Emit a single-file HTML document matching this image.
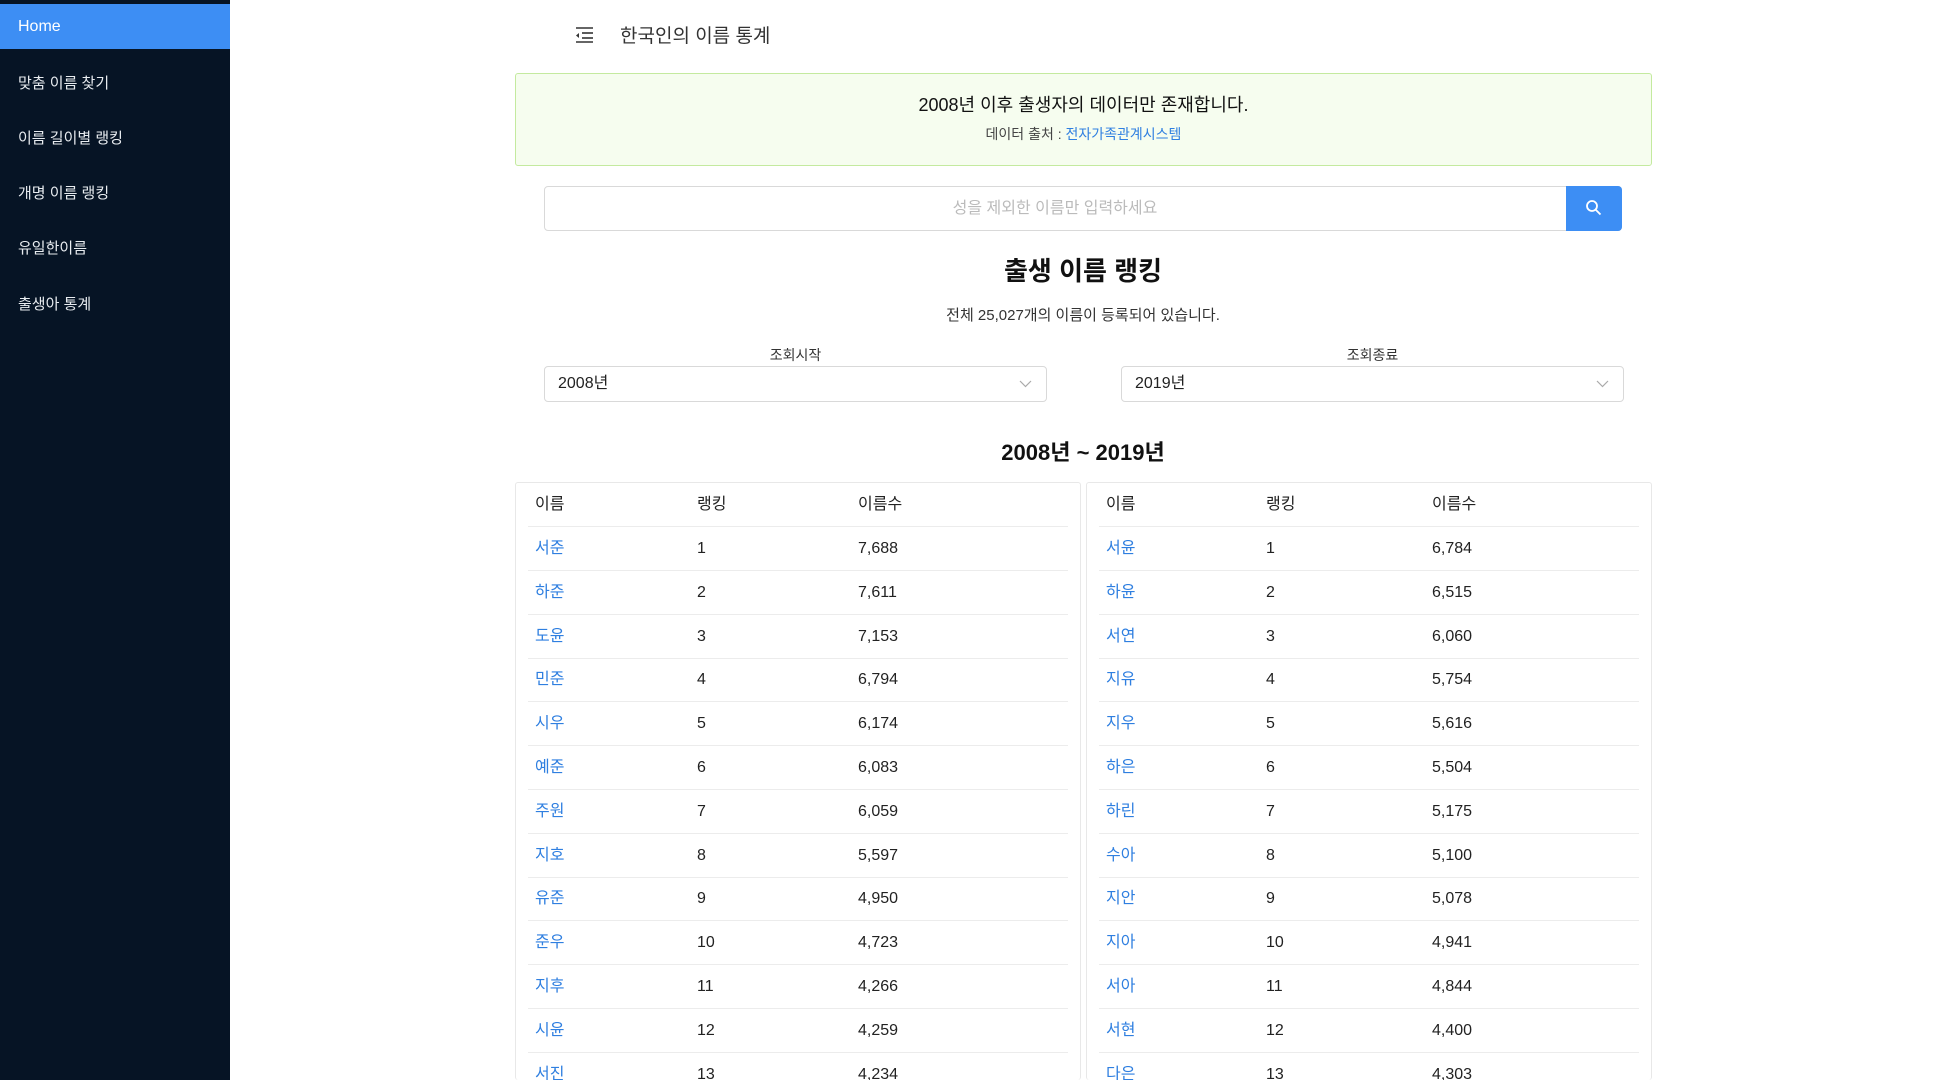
<!DOCTYPE html>
<html><head><meta charset="utf-8"><style>
*{box-sizing:border-box;margin:0;padding:0}
html,body{width:1934px;height:1080px;overflow:hidden}
body{background:#fff;font-family:"Liberation Sans","Noto Sans CJK KR",sans-serif;color:#222;position:relative}
.side{position:absolute;left:0;top:0;width:230px;height:1080px;background:#061425}
.home{position:absolute;left:0;top:4px;width:230px;height:45px;background:#3d8ef4;color:#fff;font-size:16px;line-height:45px;padding-left:18px}
.mi{position:absolute;left:18px;color:#e8ecf0;font-size:15px}
.abs{position:absolute}
.alert{left:515px;top:73px;width:1137px;height:93px;background:#f6fdef;border:1px solid #c4ea9f;border-radius:3px;text-align:center}
.search{left:544px;top:186px;width:1078px;height:45px;border:1px solid #d9d9d9;border-radius:4px}
.btn{right:-1px;top:-1px;width:56px;height:45px;background:#3d8ef4;border-radius:0 4px 4px 0}
.sel{top:366px;width:503px;height:36px;border:1px solid #d9d9d9;border-radius:4px;font-size:16px;line-height:34px;padding-left:13px}
.tbl{top:482px;width:566px;height:598px;border:1px solid #e8e8e8;border-bottom:none;border-radius:3px;overflow:hidden}
.row{position:absolute;left:12px;right:12px;height:44px;border-bottom:1px solid #ececec;font-size:16px}
.row span{position:absolute;top:0;line-height:43px;height:43px}
a{color:#2f7fe0;text-decoration:none}
</style></head><body>
<div class="side">
<div class="home">Home</div>
<div class="mi" style="top:72px">맞춤 이름 찾기</div>
<div class="mi" style="top:127px">이름 길이별 랭킹</div>
<div class="mi" style="top:182px">개명 이름 랭킹</div>
<div class="mi" style="top:237px">유일한이름</div>
<div class="mi" style="top:293px">출생아 통계</div>
</div>
<svg class="abs" style="left:574px;top:26px" width="20" height="18" viewBox="0 0 20 18"><g stroke="#333" stroke-width="1.6"><line x1="2" y1="2" x2="19" y2="2"/><line x1="8" y1="7" x2="19" y2="7"/><line x1="8" y1="12" x2="19" y2="12"/><line x1="2" y1="16" x2="19" y2="16"/></g><path d="M5 7 L2 9.5 L5 12Z" fill="#333"/></svg>
<div class="abs" style="left:620px;top:21px;font-size:19px;color:#333">한국인의 이름 통계</div>
<div class="abs alert">
<div style="margin-top:17px;font-size:18px;color:#111">2008년 이후 출생자의 데이터만 존재합니다.</div>
<div style="margin-top:7px;font-size:14px;color:#444">데이터 출처 : <a>전자가족관계시스템</a></div>
</div>
<div class="abs search"><div style="text-align:center;line-height:43px;color:#bbb;font-size:16px;padding-right:56px">성을 제외한 이름만 입력하세요</div>
<div class="abs btn"><svg style="position:absolute;left:19px;top:13px" width="18" height="18" viewBox="0 0 18 18"><circle cx="7" cy="7" r="5" fill="none" stroke="#fff" stroke-width="1.8"/><line x1="10.6" y1="10.6" x2="15.5" y2="15.5" stroke="#fff" stroke-width="1.8"/></svg></div></div>
<div class="abs" style="left:544px;width:1078px;top:251px;text-align:center;font-size:26px;font-weight:bold;color:#111">출생 이름 랭킹</div>
<div class="abs" style="left:544px;width:1078px;top:304px;text-align:center;font-size:15px;color:#333">전체 25,027개의 이름이 등록되어 있습니다.</div>
<div class="abs" style="left:544px;width:503px;top:345px;text-align:center;font-size:14px;color:#333">조회시작</div>
<div class="abs" style="left:1121px;width:503px;top:345px;text-align:center;font-size:14px;color:#333">조회종료</div>
<div class="abs sel" style="left:544px">2008년<svg style="position:absolute;right:14px;top:13px" width="13" height="8" viewBox="0 0 13 8"><path d="M1 1 L6.5 6.5 L12 1" fill="none" stroke="#aaa" stroke-width="1.2"/></svg></div>
<div class="abs sel" style="left:1121px">2019년<svg style="position:absolute;right:14px;top:13px" width="13" height="8" viewBox="0 0 13 8"><path d="M1 1 L6.5 6.5 L12 1" fill="none" stroke="#aaa" stroke-width="1.2"/></svg></div>
<div class="abs" style="left:544px;width:1078px;top:435px;text-align:center;font-size:22px;font-weight:bold;color:#111">2008년 ~ 2019년</div>
<div class="abs tbl" style="left:515px" id="t1"></div>
<div class="abs tbl" style="left:1086px" id="t2"></div>
<script>
var L=[["서준",7688],["하준",7611],["도윤",7153],["민준",6794],["시우",6174],["예준",6083],["주원",6059],["지호",5597],["유준",4950],["준우",4723],["지후",4266],["시윤",4259],["서진",4234]];
var R=[["서윤",6784],["하윤",6515],["서연",6060],["지유",5754],["지우",5616],["하은",5504],["하린",5175],["수아",5100],["지안",5078],["지아",4941],["서아",4844],["서현",4400],["다은",4303]];
function f(n){return n.toLocaleString("en-US")}
function b(id,d,c){var h='<div class="row" style="top:0"><span style="left:'+c[0]+'px">이름</span><span style="left:'+c[1]+'px">랭킹</span><span style="left:'+c[2]+'px">이름수</span></div>';
d.forEach(function(r,i){h+='<div class="row" style="top:'+(44+i*43.8)+'px"><span style="left:'+c[0]+'px"><a>'+r[0]+'</a></span><span style="left:'+c[1]+'px">'+(i+1)+'</span><span style="left:'+c[2]+'px">'+f(r[1])+'</span></div>'});
document.getElementById(id).innerHTML=h}
b("t1",L,[7,169,330]);b("t2",R,[7,167,333]);
</script>
</body></html>
